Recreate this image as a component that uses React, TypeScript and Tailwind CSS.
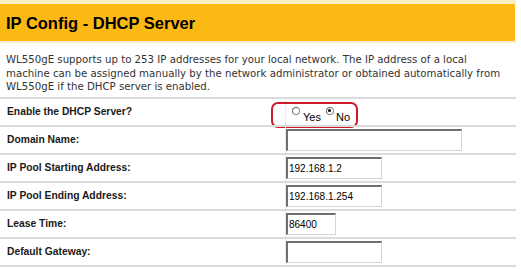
import React from "react";

function Radio({ checked }: { checked?: boolean }) {
  return (
    <span className="relative inline-block w-[8px] h-[8px] rounded-full border border-[#8a8a8a] border-t-[#6a6a6a] border-l-[#6a6a6a] bg-white">
      {checked && (
        <span className="absolute left-[1.5px] top-[1.5px] w-[3px] h-[3px] rounded-full bg-black" />
      )}
    </span>
  );
}

function Field({ w, value }: { w: string; value?: string }) {
  return (
    <div
      className={`${w} h-[22px] bg-white border-t-2 border-l-2 border-r border-b border-t-[#6f6f6f] border-l-[#6f6f6f] border-r-[#d4d4d4] border-b-[#d4d4d4] flex items-center pl-[1px] text-[10px] text-black font-['Liberation_Sans',Arial,sans-serif]`}
    >
      {value}
    </div>
  );
}

function Row({ label, children, extra }: { label: string; children?: React.ReactNode; extra?: React.ReactNode }) {
  return (
    <div className="relative flex border-t-2 border-[#dcdcdc] h-[28px]">
      <div className="w-[286px] shrink-0 border-r border-[#ececec] flex items-center pl-[7px] text-[10.3px] font-bold text-[#1a1a1a] font-['Liberation_Sans',Arial,sans-serif]">
        {label}
      </div>
      <div className="flex items-center pl-[0px]">{children}</div>
      {extra}
    </div>
  );
}

export default function App() {
  return (
    <div className="w-[521px] h-[269px] bg-white overflow-hidden">
      <div className="h-[4px] bg-[#f6efc4] w-[516px]" />
      <div className="h-[37px] w-[515px] bg-[#fcb813] flex items-center pl-[6px] pt-[1px]">
        <span className="text-[16.5px] font-bold text-black font-['Liberation_Sans',Arial,sans-serif]">
          IP Config - DHCP Server
        </span>
      </div>
      <div className="h-[2px] w-[516px] bg-[#f8efc8]" />
      <div className="pt-[10px] pl-[6px] pb-[3px] w-[516px] text-[10.2px] leading-[13.5px] text-[#333] font-['DejaVu_Sans',Verdana,sans-serif] whitespace-nowrap">
        WL550gE supports up to 253 IP addresses for your local network. The IP address of a local
        <br />
        machine can be assigned manually by the network administrator or obtained automatically from
        <br />
        WL550gE if the DHCP server is enabled.
      </div>
      <div className="w-[516px] border-b-2 border-[#dcdcdc]">
        <Row
          label="Enable the DHCP Server?"
          extra={
            <div className="absolute left-[271px] top-[3px] w-[87px] h-[26px] rounded-[7px] border-2 border-[#cc1a2a]" />
          }
        >
          <div className="flex items-start pl-[6px] h-[26px] font-['Liberation_Sans',Arial,sans-serif] text-[11px] text-black">
            <span className="mt-[8px] flex"><Radio /></span>
            <span className="mt-[13px] ml-[3px] leading-none">Yes</span>
            <span className="mt-[8px] ml-[5px] flex"><Radio checked /></span>
            <span className="mt-[13px] ml-[2px] leading-none">No</span>
          </div>
        </Row>
        <Row label="Domain Name:">
          <Field w="w-[176px]" />
        </Row>
        <Row label="IP Pool Starting Address:">
          <Field w="w-[96px]" value="192.168.1.2" />
        </Row>
        <Row label="IP Pool Ending Address:">
          <Field w="w-[96px]" value="192.168.1.254" />
        </Row>
        <Row label="Lease Time:">
          <Field w="w-[50px]" value="86400" />
        </Row>
        <Row label="Default Gateway:">
          <Field w="w-[96px]" />
        </Row>
      </div>
    </div>
  );
}
